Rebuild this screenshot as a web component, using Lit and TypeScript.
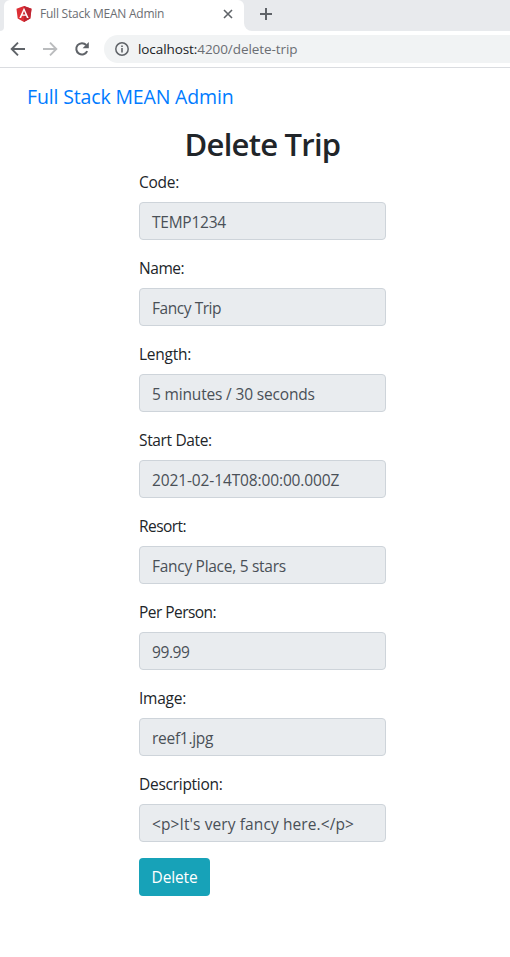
import { LitElement, html, css } from "lit";
import { customElement } from "lit/decorators.js";

interface Field {
  label: string;
  value: string;
  /* letter-spacing of the label and of the value, in px */
  tracking: [number, number];
}

const FIELDS: Field[] = [
  { label: "Code:", value: "TEMP1234", tracking: [-0.25, -0.25] },
  { label: "Name:", value: "Fancy Trip", tracking: [-0.45, -0.45] },
  { label: "Length:", value: "5 minutes / 30 seconds", tracking: [-0.26, -0.17] },
  { label: "Start Date:", value: "2021-02-14T08:00:00.000Z", tracking: [-0.35, -0.125] },
  { label: "Resort:", value: "Fancy Place, 5 stars", tracking: [-0.55, -0.285] },
  { label: "Per Person:", value: "99.99", tracking: [-0.54, -0.4] },
  { label: "Image:", value: "reef1.jpg", tracking: [-0.25, -0.28] },
  { label: "Description:", value: "<p>It's very fancy here.</p>", tracking: [-0.27, 0.1] },
];

@customElement("app-root")
export class AppRoot extends LitElement {
  static styles = css`
    :host { display: block; height: 957px; overflow: hidden; background: #fff; color: #212529; font: 400 15.5px/24px "Open Sans", "Noto Sans", sans-serif; }
    * { box-sizing: border-box; }
    svg { display: block; flex: none; }
    .strip { height: 31px; display: flex; background: #e8eaed; }
    .edge { width: 4px; background: #fff; }
    .edge i { display: block; width: 4px; height: 31px; background: #e8eaed; border-bottom-right-radius: 6px; }
    .tab { width: 240px; background: #fff; border-radius: 6px 6px 0 0; display: flex; align-items: center; padding: 0 10px 3px 12px; font-size: 12px; letter-spacing: -0.23px; color: #6b6e73; }
    .tab span { margin-left: 8px; flex: 1; white-space: nowrap; }
    .rest { flex: 1; background: #fff; }
    .rest div { height: 31px; background: #e8eaed; border-bottom-left-radius: 8px; padding: 8px 0 0 16px; }
    .bar { height: 37px; display: flex; align-items: center; padding-left: 10px; border-bottom: 1px solid #dadce0; }
    .bar > svg { margin-right: 16px; }
    .omni { flex: 1; height: 28px; background: #f1f3f4; border-radius: 14px 0 0 14px; margin-left: -2px; padding-left: 10px; display: flex; align-items: center; font-size: 13.5px; letter-spacing: -0.08px; color: #6b6e73; }
    .omni span { margin-left: 8px; }
    .omni b { font-weight: 400; color: #202124; }
    .brand { padding: 14px 27px 0; font-size: 19.5px; letter-spacing: -0.15px; line-height: 30px; color: #007bff; height: 56px; }
    .form { width: 247px; margin-left: 139px; }
    h1 { margin: 0 0 8px; height: 38px; font-size: 31px; letter-spacing: -0.75px; line-height: 40px; font-weight: 600; text-align: center; }
    .label { height: 24px; margin-bottom: 8px; white-space: nowrap; }
    .input { height: 38px; margin-bottom: 16px; border: 1px solid #ced4da; border-radius: 4px; background: #e9ecef; color: #495057; padding: 7px 12px; white-space: nowrap; }
    .btn { display: block; width: 71px; height: 38px; border: 0; border-radius: 4px; background: #17a2b8; color: #fff; font: inherit; letter-spacing: -0.15px; padding: 0; }
  `;

  render() {
    return html`
      <div class="strip">
        <div class="edge"><i></i></div>
        <div class="tab">
          <svg width="16" height="16" viewBox="0 0 16 16"><path fill="#dd2f35" d="M8 0 15.5 2.7 14.3 12.6 8 16 1.7 12.6.5 2.7Z"/><path fill="#bd2532" d="M8 0 15.5 2.7 14.3 12.6 8 16Z"/><path fill="#fff" d="M8 1.8 3.3 12.1H5.1L6 9.8H10L10.9 12.1H12.7ZM8 5.1 9.4 8.4H6.6Z"/></svg>
          <span>Full Stack MEAN Admin</span>
          <svg width="12" height="12" viewBox="0 0 12 12"><path d="M2 2l8 8M10 2l-8 8" stroke="#5f6368" stroke-width="1.6"/></svg>
        </div>
        <div class="rest"><div><svg width="12" height="12" viewBox="0 0 12 12"><path d="M6 0v12M0 6h12" stroke="#5f6368" stroke-width="2"/></svg></div></div>
      </div>
      <div class="bar">
        <svg width="16" height="16" viewBox="0 0 16 16"><path d="M15 8H2M8 1.7 1.7 8 8 14.3" fill="none" stroke="#5f6368" stroke-width="1.9"/></svg>
        <svg width="16" height="16" viewBox="0 0 16 16"><path d="M1 8H14M8 1.7 14.3 8 8 14.3" fill="none" stroke="#babcbe" stroke-width="1.9"/></svg>
        <svg width="16" height="16" viewBox="0 0 16 16"><path d="M13.2 10.2A5.7 5.7 0 1 1 12.2 4" fill="none" stroke="#5f6368" stroke-width="2"/><path d="M14.8 1v6.2H8.6Z" fill="#5f6368"/></svg>
        <div class="omni">
          <svg width="16" height="16" viewBox="0 0 16 16"><circle cx="8" cy="8" r="6.2" fill="none" stroke="#5f6368" stroke-width="1.5"/><path d="M8 7v4.4M8 4.5v1.6" stroke="#5f6368" stroke-width="1.6"/></svg>
          <span><b>localhost:</b>4200/delete-trip</span>
        </div>
      </div>
      <div class="brand">Full Stack MEAN Admin</div>
      <div class="form">
        <h1>Delete Trip</h1>
        ${FIELDS.map((f) => html`
          <div class="label" style="letter-spacing:${f.tracking[0]}px">${f.label}</div>
          <div class="input" style="letter-spacing:${f.tracking[1]}px">${f.value}</div>`)}
        <button class="btn">Delete</button>
      </div>
    `;
  }
}
